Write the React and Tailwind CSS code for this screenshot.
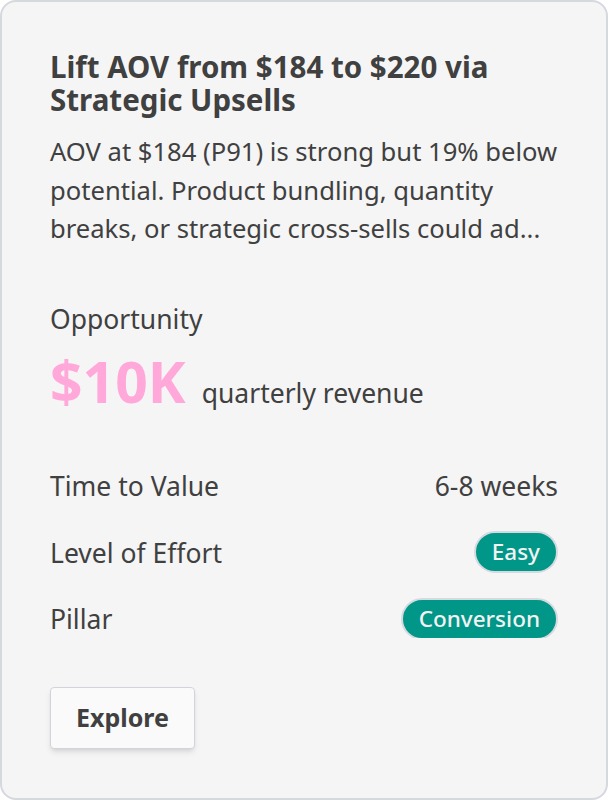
import React from "react";

export default function App() {
  const font = { fontFamily: "'Noto Sans', 'Open Sans', sans-serif" };
  return (
    <div className="w-[608px] h-[800px] bg-white" style={font}>
      <div className="h-full border-2 border-[#d5d9de] rounded-2xl bg-[#f5f5f5] pl-12 pr-[48px] pt-12 flex flex-col text-[#404040]">
        <h1 className="text-[29.5px] leading-[33px] font-bold m-0">
          Lift AOV from $184 to $220 via Strategic Upsells
        </h1>
        <p className="mt-[17px] text-[25.6px] leading-[38.5px]">
          AOV at $184 (P91) is strong but 19% below potential. Product bundling, quantity breaks, or strategic cross-sells could ad...
        </p>
        <div className="mt-[54px] text-[26.5px] leading-[32px]">Opportunity</div>
        <div className="mt-4 flex items-baseline gap-4">
          <span className="text-[57px] leading-[60px] font-bold text-[#ffa8d9]">$10K</span>
          <span className="text-[26.5px] leading-[32px]">quarterly revenue</span>
        </div>
        <div className="mt-[53px] flex flex-col gap-[25px] text-[26.5px]">
          <div className="h-[42px] flex items-center justify-between">
            <span className="pt-1">Time to Value</span>
            <span className="pt-1">6-8 weeks</span>
          </div>
          <div className="h-[42px] flex items-center justify-between">
            <span className="pt-1">Level of Effort</span>
            <span className="h-[42px] px-4 rounded-full bg-[#009688] border-2 border-[#d5dadf] text-[#f2f2f2] font-medium text-[22.5px] flex items-center">Easy</span>
          </div>
          <div className="h-[40px] flex items-start justify-between overflow-hidden">
            <span className="self-center pt-1">Pillar</span>
            <span className="h-[42px] shrink-0 px-4 rounded-full bg-[#009688] border-2 border-[#d5dadf] text-[#f2f2f2] font-medium text-[22.5px] flex items-center">Conversion</span>
          </div>
        </div>
        <div className="mt-[49px]">
          <button className="w-[145px] h-[62px] rounded border-[1.5px] border-[#d1d5db] bg-[#fafafa] shadow-md text-[25px] font-bold text-[#404040]">
            Explore
          </button>
        </div>
      </div>
    </div>
  );
}
